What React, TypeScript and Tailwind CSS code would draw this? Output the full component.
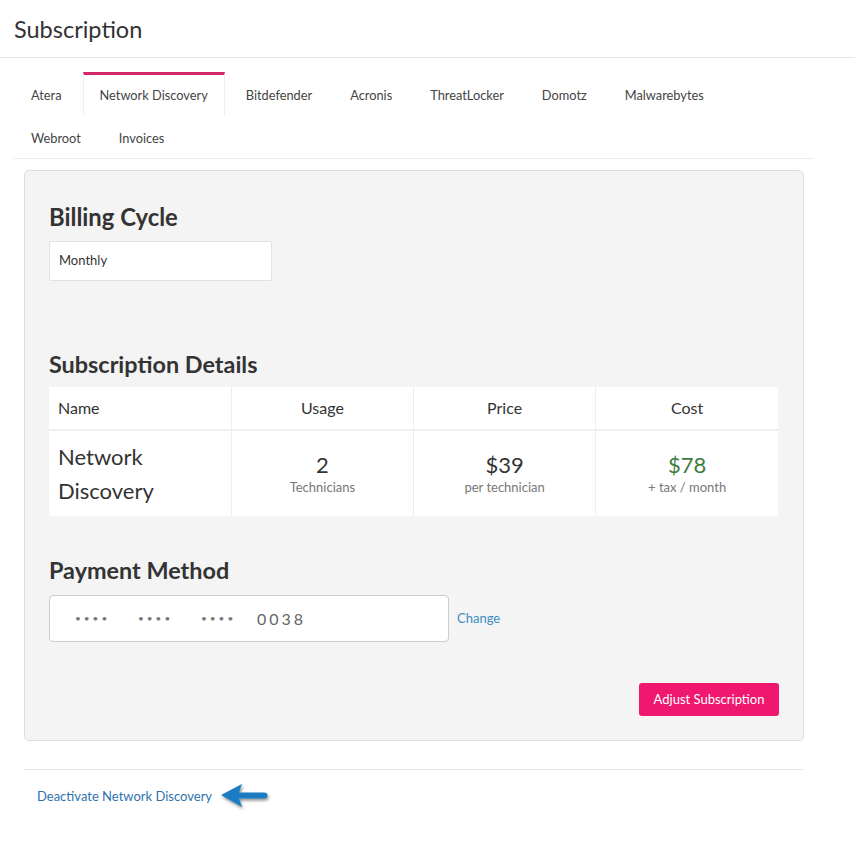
import React from 'react';

const tabsRow1 = ['Atera', 'Network Discovery', 'Bitdefender', 'Acronis', 'ThreatLocker', 'Domotz', 'Malwarebytes'];
const tabsRow2 = ['Webroot', 'Invoices'];

const Tab = ({ label, active }: { label: string; active?: boolean }) => (
    <div
        className={`px-4 h-[43px] flex items-center text-[12.8px] text-[#444] border-x ${
            active ? 'border-t-[3px] border-t-[#d6266b] border-x-[#eeeeee] bg-white pt-[1px]' : 'border-transparent pt-[4px]'
        }`}
    >
        {label}
    </div>
);

const ArrowLeft = () => (
    <svg width="56" height="34" viewBox="0 0 56 34" className="ml-[6px] -my-[8px]">
        <defs>
            <filter id="sh" x="-20%" y="-30%" width="150%" height="180%">
                <feDropShadow dx="1" dy="2" stdDeviation="1.4" floodColor="#000" floodOpacity="0.45" />
            </filter>
        </defs>
        <g filter="url(#sh)">
            <path d="M3 16 L24 5 L21 13.5 L46 13.5 Q49.5 13.5 49.5 16.5 Q49.5 19.5 46 19.5 L21 19.5 L24 28 Z" fill="#1a7cc2" />
        </g>
    </svg>
);

export default function App() {
    return (
        <div className="min-h-screen bg-white text-[#333]" style={{ fontFamily: 'Lato, "Noto Sans", sans-serif' }}>
            <div className="px-[14px] pt-[14px] pb-[13px] border-b border-[#e6e6e6]">
                <h1 className="text-[23.5px] leading-[30px] text-[#333]">Subscription</h1>
            </div>

            <div className="mx-[14px] w-[800px] mt-[14px] border-b border-[#eeeeee]">
                <div className="flex gap-[4px]">
                    {tabsRow1.map((t) => (
                        <Tab key={t} label={t} active={t === 'Network Discovery'} />
                    ))}
                </div>
                <div className="flex gap-[4px]">
                    {tabsRow2.map((t) => (
                        <Tab key={t} label={t} />
                    ))}
                </div>
            </div>

            <div className="ml-[24px] w-[780px] mt-[11px] bg-[#f4f4f4] border border-[#dddddd] rounded-[5px] px-[24px] pt-[32px] pb-[24px]">
                <h2 className="text-[23.8px] leading-[28px] font-bold text-[#333]">Billing Cycle</h2>
                <div className="mt-[10px] w-[223px] h-[40px] bg-white border border-[#e2e2e2] rounded-[2px] flex items-center px-[9px] text-[13px] text-[#333]">
                    Monthly
                </div>

                <h2 className="mt-[69px] text-[23.4px] leading-[28px] font-bold text-[#333]">Subscription Details</h2>
                <table className="mt-[9px] w-[729px] table-fixed bg-white border-collapse">
                    <thead>
                        <tr className="h-[43px] border-b-2 border-[#f0f0f0]">
                            <th className="text-left font-normal text-[16px] px-[9px] text-[#333]">Name</th>
                            <th className="font-normal text-[16px] border-l border-[#eeeeee] text-[#333]">Usage</th>
                            <th className="font-normal text-[16px] border-l border-[#eeeeee] text-[#333]">Price</th>
                            <th className="font-normal text-[16px] border-l border-[#eeeeee] text-[#333]">Cost</th>
                        </tr>
                    </thead>
                    <tbody>
                        <tr className="h-[86px]">
                            <td className="px-[9px] text-[22px] leading-[34px] text-[#333]">
                                Network
                                <br />
                                Discovery
                            </td>
                            <td className="text-center border-l border-[#eeeeee]">
                                <div className="text-[22px] leading-[26px] text-[#333]">2</div>
                                <div className="text-[13px] leading-[18px] text-[#777]">Technicians</div>
                            </td>
                            <td className="text-center border-l border-[#eeeeee]">
                                <div className="text-[22px] leading-[26px] text-[#333]">$39</div>
                                <div className="text-[13px] leading-[18px] text-[#777]">per technician</div>
                            </td>
                            <td className="text-center border-l border-[#eeeeee]">
                                <div className="text-[22px] leading-[26px] text-[#3d7b3d]">$78</div>
                                <div className="text-[13px] leading-[18px] text-[#777]">+ tax / month</div>
                            </td>
                        </tr>
                    </tbody>
                </table>

                <h2 className="mt-[40px] text-[23.4px] leading-[28px] font-bold text-[#333]">Payment Method</h2>
                <div className="mt-[11px] flex items-center">
                    <div className="w-[400px] h-[47px] bg-white border border-[#cccccc] rounded-[4px] flex items-center pl-[25px] text-[#777]">
                        <span className="w-[63px] text-[10px] tracking-[3px]">••••</span>
                        <span className="w-[63px] text-[10px] tracking-[3px]">••••</span>
                        <span className="w-[56px] text-[10px] tracking-[3px]">••••</span>
                        <span className="text-[16px] tracking-[3px] text-[#666]">0038</span>
                    </div>
                    <a className="ml-[8px] text-[13px] text-[#3a8dc6]">Change</a>
                </div>

                <div className="mt-[41px] flex justify-end">
                    <button className="h-[33px] px-[14.5px] bg-[#f0176f] text-white text-[13px] rounded-[3px]">
                        Adjust Subscription
                    </button>
                </div>
            </div>

            <div className="ml-[24px] w-[780px] mt-[28px] border-t border-[#e8e8e8] pt-[16px] px-[13px] flex items-center">
                <a className="text-[13px] leading-[20px] text-[#2f72ad]">Deactivate Network Discovery</a>
                <ArrowLeft />
            </div>
        </div>
    );
}
